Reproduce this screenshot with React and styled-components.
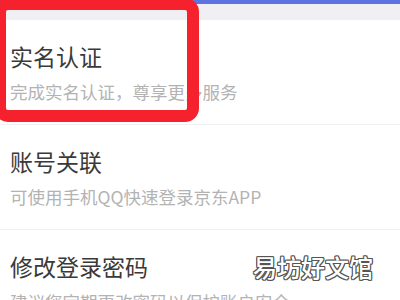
import styled, { createGlobalStyle } from "styled-components"

const GlobalStyle = createGlobalStyle`
  html, body {
    margin: 0;
    padding: 0;
    background: #fff;
    overflow: hidden;
  }
  body {
    font-family: "Noto Sans CJK SC", "Noto Sans", sans-serif;
  }
`

const Screen = styled.div`
  position: relative;
  width: 400px;
  height: 300px;
  overflow: hidden;
  background: #fff;
`
const TopBar = styled.div`
  height: 4px;
  background: #5b74df;
`
const GrayBand = styled.div`
  height: 16px;
  background: #efeff4;
`
const List = styled.div`
  display: flex;
  flex-direction: column;
`
const Item = styled.div`
  display: flex;
  flex-direction: column;
  gap: 11px;
  padding: 22px 10px 21px;
  border-bottom: 1px solid #f0f0f0;
`
const Title = styled.div`
  font-size: 23px;
  line-height: 28px;
  color: #3a3a3a;
`
const Sub = styled.div`
  font-size: 17.5px;
  line-height: 22px;
  color: #b3b3b3;
  white-space: nowrap;
`
const Highlight = styled.div`
  position: absolute;
  left: -6px;
  top: -2px;
  width: 181px;
  height: 100px;
  border: 12px solid #f5222d;
  border-radius: 14px;
`
const Watermark = styled.div`
  position: absolute;
  left: 253px;
  top: 252px;
  font-size: 24px;
  line-height: 30px;
  font-weight: 500;
  color: #fff;
  text-shadow:
    1px 0 0 #555, -1px 0 0 #555, 0 1px 0 #555, 0 -1px 0 #555,
    1px 1px 0 #555, -1px -1px 0 #555, 1px -1px 0 #555, -1px 1px 0 #555;
`

const items = [
  { title: "实名认证", sub: "完成实名认证，尊享更多服务" },
  { title: "账号关联", sub: "可使用手机QQ快速登录京东APP" },
  { title: "修改登录密码", sub: "建议您定期更改密码以保护账户安全" },
]

export default function App() {
  return (
    <Screen>
      <GlobalStyle />
      <TopBar />
      <GrayBand />
      <List>
        {items.map((it) => (
          <Item key={it.title}>
            <Title>{it.title}</Title>
            <Sub>{it.sub}</Sub>
          </Item>
        ))}
      </List>
      <Highlight />
      <Watermark>易坊好文馆</Watermark>
    </Screen>
  )
}
